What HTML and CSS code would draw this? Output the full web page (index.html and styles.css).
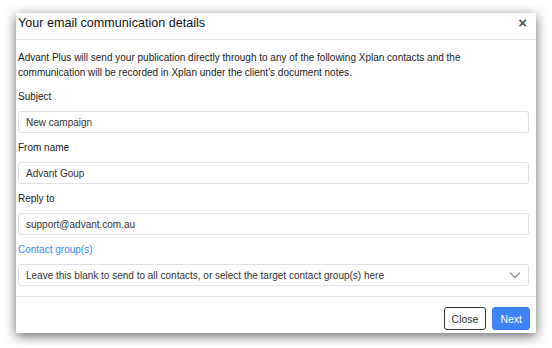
FILE: index.html
```html
<!DOCTYPE html>
<html lang="en">
<head>
    <meta charset="UTF-8">
    <meta name="viewport" content="width=device-width, initial-scale=1.0">
    <title>Your email communication details</title>
    <link rel="stylesheet" href="styles.css">
</head>
<body>
    <div class="modal">
        <div class="modal-header">
            <h1 class="modal-title">Your email communication details</h1>
            <button class="close" type="button">&times;</button>
        </div>

        <div class="modal-body">
            <p class="intro">Advant Plus will send your publication directly through to any of the following Xplan contacts and the communication will be recorded in Xplan under the client's document notes.</p>

            <div class="form-group">
                <label for="subject">Subject</label>
                <input type="text" id="subject" value="New campaign">
            </div>

            <div class="form-group">
                <label for="from-name">From name</label>
                <input type="text" id="from-name" value="Advant Goup">
            </div>

            <div class="form-group">
                <label for="reply-to">Reply to</label>
                <input type="text" id="reply-to" value="support@advant.com.au">
            </div>

            <div class="form-group">
                <label for="groups" class="link-label">Contact group(s)</label>
                <div class="select" id="groups">
                    <span>Leave this blank to send to all contacts, or select the target contact group(s) here</span>
                    <svg width="12" height="8" viewBox="0 0 12 8"><path d="M1 1.5l5 5 5-5" fill="none" stroke="#a0a0a0" stroke-width="1.6"/></svg>
                </div>
            </div>
        </div>

        <div class="modal-footer">
            <button class="btn btn-outline">Close</button>
            <button class="btn btn-primary">Next</button>
        </div>
    </div>
</body>
</html>
```

FILE: styles.css
```css
body {
    margin: 0;
    padding: 13px 16px;
    background-color: #fff;
    font-family: 'Liberation Sans', Arial, sans-serif;
    color: #222;
}
.modal {
    width: 520px;
    height: 320px;
    background-color: #fff;
    box-shadow: 0 3px 11px rgba(0,0,0,0.6);
    display: flex;
    flex-direction: column;
}
.modal-header {
    height: 27px;
    box-sizing: border-box;
    display: flex;
    align-items: flex-start;
    justify-content: space-between;
    padding: 2px 9px 0 2px;
    border-bottom: 1px solid #e3e6ea;
}
.modal-title {
    margin: 0;
    font-size: 12.6px;
    line-height: 16px;
    font-weight: normal;
    color: #111;
}
.close {
    border: none;
    background: none;
    padding: 0;
    font-family: inherit;
    font-size: 15px;
    line-height: 16px;
    font-weight: bold;
    color: #555;
}
.modal-body {
    padding: 10px 7px 0 2px;
    flex: 1;
    font-size: 10px;
}
.intro {
    margin: 0 0 9px;
    line-height: 15px;
    color: #222;
}
.form-group {
    margin-bottom: 7px;
}
label {
    display: block;
    line-height: 15px;
    margin-bottom: 7px;
    color: #222;
}
.link-label {
    color: #3a86f0;
}
input, .select {
    box-sizing: border-box;
    width: 100%;
    height: 22px;
    padding: 0 7px;
    border: 1px solid #dde0e4;
    border-radius: 3px;
    font-family: inherit;
    font-size: 10px;
    color: #333;
}
.select {
    display: flex;
    align-items: center;
    justify-content: space-between;
}
.modal-footer {
    border-top: 1px solid #e3e6ea;
    display: flex;
    justify-content: flex-end;
    gap: 6px;
    padding: 10px 6px 3px 0;
}
.btn {
    height: 23px;
    padding: 0 7px;
    border-radius: 3px;
    font-family: inherit;
    font-size: 10.5px;
}
.btn-outline {
    background-color: #fff;
    border: 1px solid #333;
    color: #333;
}
.btn-primary {
    background-color: #3b83f7;
    border: 1px solid #3b83f7;
    color: #fff;
}
```
